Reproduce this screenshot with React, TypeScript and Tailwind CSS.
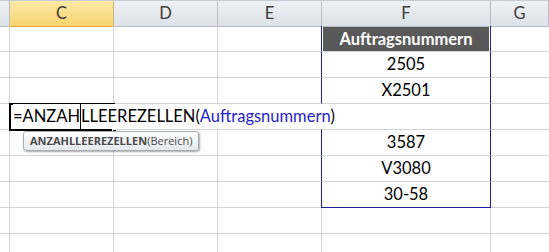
const cols = ['C', 'D', 'E', 'F', 'G'];

const grid = 'border-[#d4d4d4]';
const rowCols = 'grid grid-cols-[10px_104px_104px_104px_169px_58px]';

function Cell({ children, className = '' }: { children?: React.ReactNode; className?: string }) {
  return <div className={`h-[26px] border-b border-r ${grid} flex items-center justify-center ${className}`}>{children}</div>;
}

// f column cell inside the blue outlined range (left edge overlaps the gridline of E)
function RangeCell({ children, last }: { children?: React.ReactNode; last?: boolean }) {
  return (
    <div
      className={`h-[26px] -ml-px border-x border-b border-x-[#1f1f9c] flex items-center justify-center ${
        last ? 'border-b-[#1f1f9c]' : 'border-b-[#d4d4d4]'
      }`}
    >
      {children}
    </div>
  );
}

function DataRow({ value, last }: { value?: string; last?: boolean }) {
  return (
    <div className={rowCols}>
      <Cell />
      <Cell />
      <Cell />
      <Cell />
      <RangeCell last={last}>{value}</RangeCell>
      <Cell className="border-r-0" />
    </div>
  );
}

function EmptyRow() {
  return (
    <div className={rowCols}>
      <Cell />
      <Cell />
      <Cell />
      <Cell />
      <Cell />
      <Cell className="border-r-0" />
    </div>
  );
}

export default function App() {
  return (
    <div
      className="w-[549px] h-[252px] overflow-hidden bg-white text-[16.5px] text-black"
      style={{ fontFamily: 'Lato, "Open Sans", sans-serif' }}
    >
      {/* column headers */}
      <div className={`${rowCols} h-[26px] border-t border-[#c6cbd2] text-[#3c3c3c]`}>
        <div className="border-r border-b border-[#b7bcc4] bg-gradient-to-b from-[#eef1f5] to-[#dde2e9]" />
        {cols.map((c, i) => (
          <div
            key={c}
            className={
              i === 0
                ? 'flex items-center justify-center border-r border-b border-b-[#e4a746] border-r-[#c8b27a] bg-gradient-to-b from-[#fdeaa6] to-[#f8d36c]'
                : 'flex items-center justify-center border-r border-b border-[#b7bcc4] bg-gradient-to-b from-[#eef1f5] to-[#dde2e9]'
            }
          >
            {c}
          </div>
        ))}
      </div>

      {/* header cell row */}
      <div className={rowCols}>
        <Cell />
        <Cell />
        <Cell />
        <Cell />
        <div className="h-[26px] -ml-px border-x border-b border-x-[#1f1f9c] border-b-[#d4d4d4] p-px pb-0">
          <div className="h-full bg-[#595959] text-white font-bold flex items-center justify-center">Auftragsnummern</div>
        </div>
        <Cell className="border-r-0" />
      </div>

      <DataRow value="2505" />
      <DataRow value="X2501" />

      {/* row being edited */}
      <div className={rowCols}>
        <Cell />
        <div className="relative h-[26px]">
          <div className="absolute -left-px -top-px w-[106px] h-[28px] border-2 border-black" />
          <div className="absolute right-[-3px] bottom-[-4px] w-[5px] h-[5px] bg-black border border-white" />
          <div className="absolute left-[3px] top-0 h-[25px] flex items-center whitespace-nowrap bg-white pr-0.5">
            <span>=ANZAH</span>
            <span className="w-px h-[25px] bg-black" />
            <span>LLEEREZELLEN(</span>
            <span className="text-[#1f1fcc]">Auftragsnummern</span>
            <span>)</span>
          </div>
          <div
            className="absolute left-[13px] top-[27px] h-[20px] px-[6px] flex items-center rounded-[3px] border border-[#a8acb3] bg-gradient-to-b from-white to-[#e6e8ec] shadow-[1px_1px_2px_rgba(0,0,0,0.35)] text-[11px] text-[#4a4a4a] whitespace-nowrap z-10"
            style={{ fontFamily: '"Open Sans", sans-serif' }}
          >
            <span className="font-bold">ANZAHLLEEREZELLEN</span>
            <span>(Bereich)</span>
          </div>
        </div>
        <div className={`h-[26px] border-b ${grid}`} />
        <div className={`h-[26px] border-b ${grid}`} />
        <RangeCell />
        <Cell className="border-r-0" />
      </div>

      <DataRow value="3587" />
      <DataRow value="V3080" />
      <DataRow value="30-58" last />
      <EmptyRow />
      <EmptyRow />
    </div>
  );
}
